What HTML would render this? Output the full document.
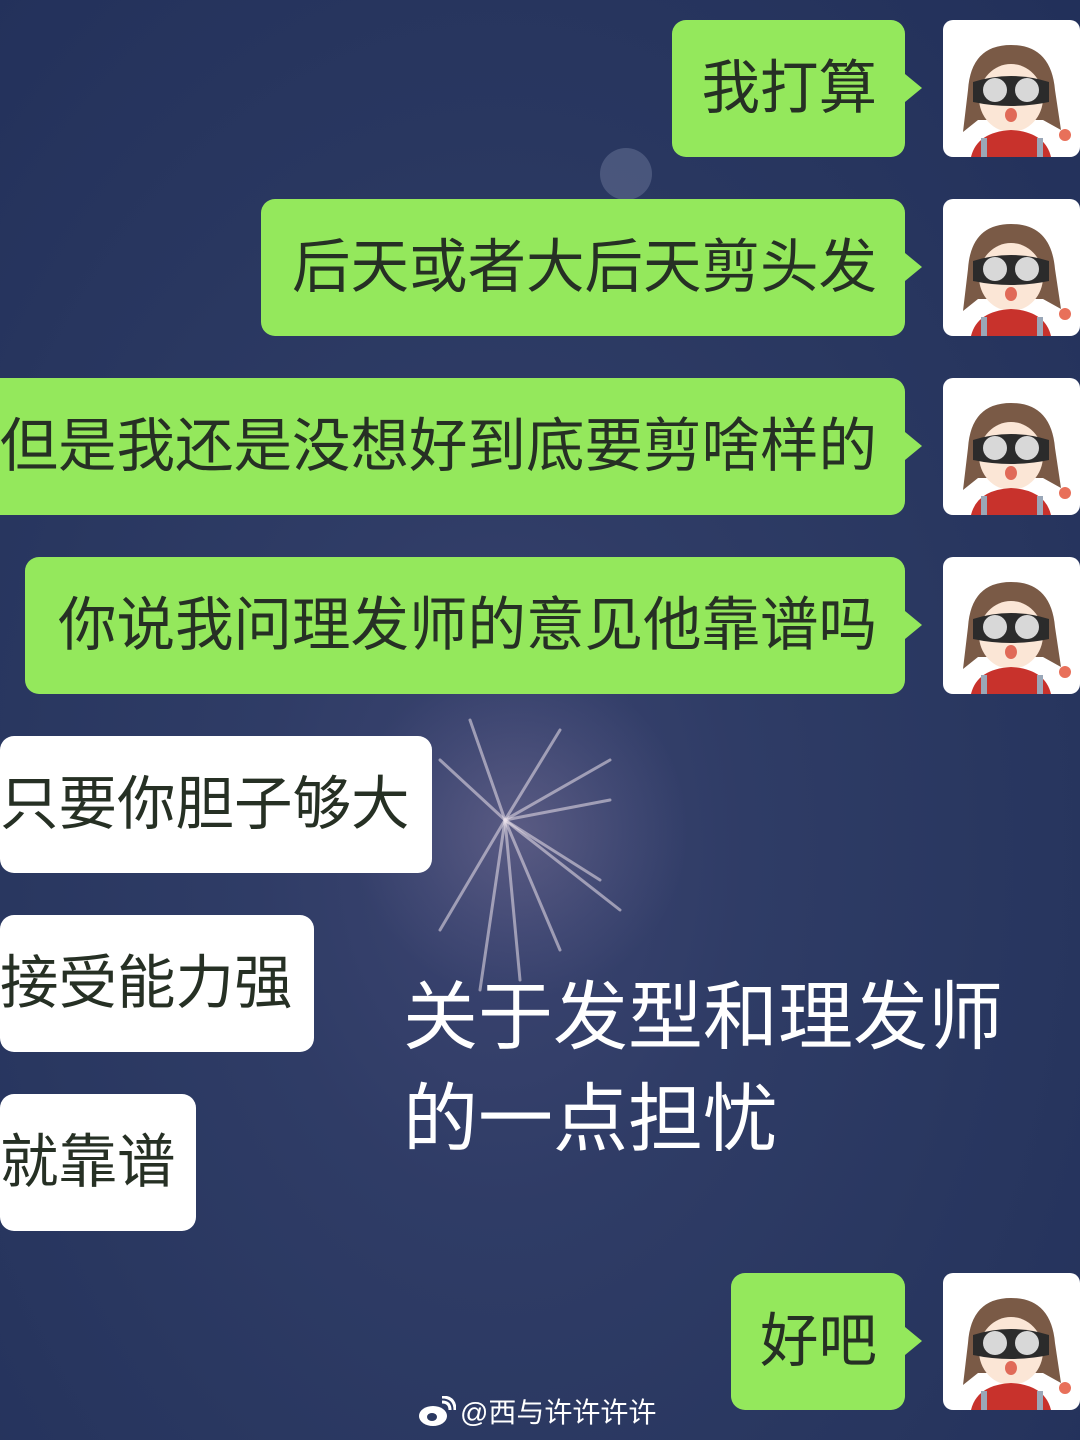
<!DOCTYPE html>
<html><head><meta charset="utf-8"><style>
html,body{margin:0;padding:0}
body{width:1080px;height:1440px;overflow:hidden;position:relative;
background:radial-gradient(ellipse at 500px 850px,#3c4470 0,#2f3c66 30%,#293760 60%,#22305a 100%);
font-family:"Liberation Sans","Noto Sans CJK SC",sans-serif;}
.b{position:absolute;height:137px;border-radius:14px;box-sizing:border-box;font-size:58.5px;line-height:137px;color:#263024;white-space:nowrap;overflow:hidden}
.g{background:#94e85c;text-align:right;padding-right:28px;right:175px}
.tail{position:absolute;width:0;height:0;border-top:14px solid transparent;border-bottom:14px solid transparent;border-left:17px solid #94e85c;left:905px}
.w{background:#fff;left:0;text-align:right;padding-right:32px}
.av{position:absolute;left:943px;width:137px;height:137px;background:#fff;border-radius:10px;overflow:hidden}
.cap{position:absolute;left:403px;top:960px;color:#fff;font-family:"WenQuanYi Zen Hei","Noto Sans CJK SC",sans-serif;font-size:75px;line-height:102px}
.wm{position:absolute;left:460px;top:1396px;color:#fff;font-size:28px;line-height:34px;font-family:"Liberation Sans","Noto Sans CJK SC",sans-serif}
.fw{position:absolute;left:350px;top:660px;width:340px;height:340px;border-radius:50%;background:radial-gradient(circle,rgba(180,160,190,.25) 0,rgba(150,140,180,.1) 45%,rgba(0,0,0,0) 70%)}
</style></head><body>
<div class="fw"></div>
<svg style="position:absolute;left:0;top:0" width="1080" height="1440">
<g stroke="rgba(235,225,235,.55)" stroke-width="3" stroke-linecap="round">
<line x1="505" y1="820" x2="470" y2="720"/><line x1="505" y1="820" x2="560" y2="730"/><line x1="505" y1="820" x2="610" y2="800"/>
<line x1="505" y1="820" x2="600" y2="880"/><line x1="505" y1="820" x2="560" y2="950"/><line x1="505" y1="820" x2="440" y2="930"/>
<line x1="505" y1="820" x2="440" y2="760"/><line x1="505" y1="820" x2="520" y2="980"/><line x1="505" y1="820" x2="610" y2="760"/>
<line x1="505" y1="820" x2="620" y2="910"/><line x1="505" y1="820" x2="480" y2="990"/>
</g>
<circle cx="626" cy="174" r="26" fill="rgba(150,160,190,.3)"/>
</svg>

<div class="b g" style="top:20px;width:233px">我打算</div><div class="tail" style="top:74px"></div>
<div class="b g" style="top:199px;width:644px">后天或者大后天剪头发</div><div class="tail" style="top:253px"></div>
<div class="b g" style="top:378px;width:925px">但是我还是没想好到底要剪啥样的</div><div class="tail" style="top:432px"></div>
<div class="b g" style="top:557px;width:880px">你说我问理发师的意见他靠谱吗</div><div class="tail" style="top:611px"></div>
<div class="b g" style="top:1273px;width:174px">好吧</div><div class="tail" style="top:1327px"></div>

<div class="b w" style="top:736px;width:432px">只要你胆子够大</div>
<div class="b w" style="top:915px;width:314px">接受能力强</div>
<div class="b w" style="top:1094px;width:196px">就靠谱</div>

<svg width="0" height="0" style="position:absolute"><defs>
<g id="girl">
<path d="M25 70 Q28 25 68 25 Q108 25 112 70 L118 110 L100 100 L35 100 L20 112 Z" fill="#7a5a46"/>
<ellipse cx="68" cy="78" rx="32" ry="34" fill="#fbe6d6"/>
<path d="M30 62 Q68 50 106 62 L106 82 Q68 90 30 82 Z" fill="#2b2b2b"/>
<circle cx="52" cy="70" r="12" fill="#d8d8d8"/><circle cx="84" cy="70" r="12" fill="#d8d8d8"/>
<ellipse cx="68" cy="95" rx="6" ry="7" fill="#e06a58"/>
<path d="M28 137 Q34 112 68 110 Q102 112 108 137 Z" fill="#c8322c"/>
<rect x="38" y="118" width="6" height="19" fill="#9aa7b8"/><rect x="94" y="118" width="6" height="19" fill="#9aa7b8"/>
<circle cx="122" cy="115" r="6" fill="#e8705a"/>
</g></defs></svg>
<div class="av" style="top:20px"><svg width="137" height="137"><use href="#girl"/></svg></div>
<div class="av" style="top:199px"><svg width="137" height="137"><use href="#girl"/></svg></div>
<div class="av" style="top:378px"><svg width="137" height="137"><use href="#girl"/></svg></div>
<div class="av" style="top:557px"><svg width="137" height="137"><use href="#girl"/></svg></div>
<div class="av" style="top:1273px"><svg width="137" height="137"><use href="#girl"/></svg></div>

<div class="cap">关于发型和理发师<br>的一点担忧</div>
<svg style="position:absolute;left:418px;top:1396px" width="38" height="32" viewBox="0 0 38 32">
<ellipse cx="15" cy="20" rx="14" ry="10" fill="#fff"/>
<ellipse cx="14" cy="21" rx="5" ry="4" fill="#2a3860"/>
<path d="M24 6 Q32 6 32 14" stroke="#fff" stroke-width="3" fill="none"/>
<path d="M24 1 Q37 1 37 14" stroke="#fff" stroke-width="3" fill="none"/>
</svg>
<div class="wm">@西与许许许许</div>
</body></html>
